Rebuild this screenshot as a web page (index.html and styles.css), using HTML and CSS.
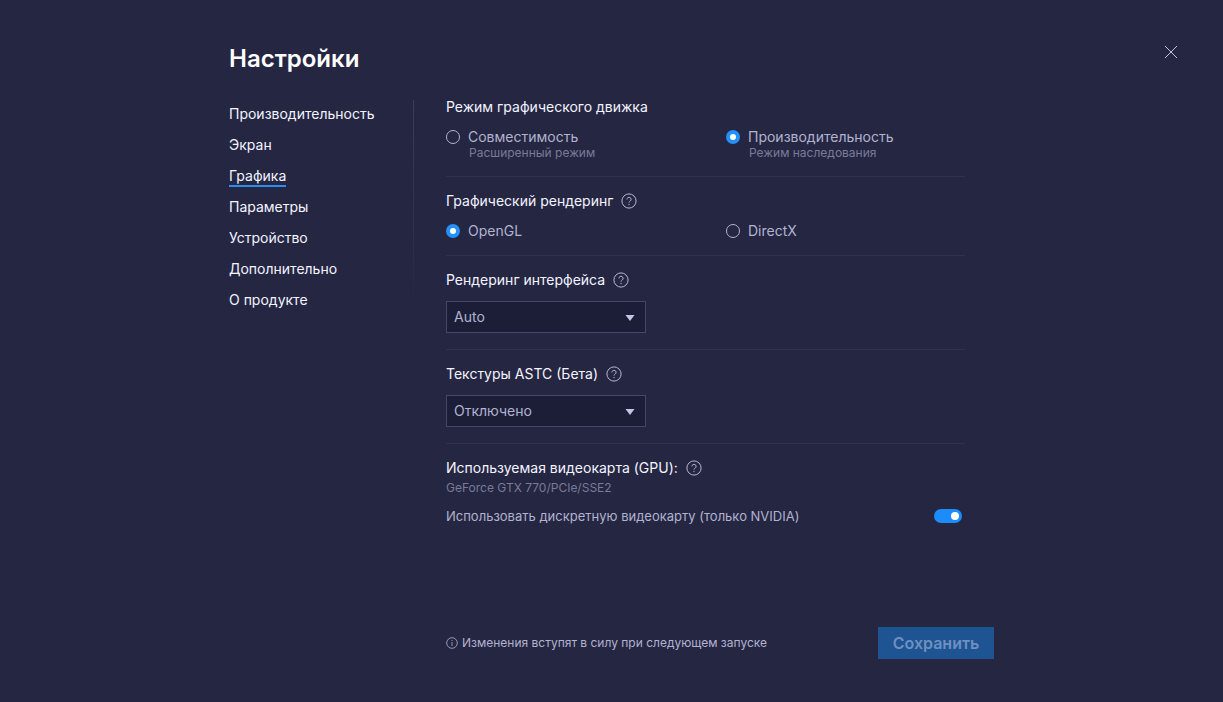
FILE: index.html
```html
<!DOCTYPE html>
<html lang="ru">
<head>
<meta charset="utf-8">
<meta name="viewport" content="width=device-width, initial-scale=1">
<title>Настройки</title>
<link rel="stylesheet" href="styles.css">
</head>
<body>
<svg class="sprite" aria-hidden="true">
  <symbol id="help" viewBox="0 0 16 16">
    <circle cx="8" cy="8" r="7.1" fill="none" stroke="currentColor"/>
    <path d="M5.9 6.4a2.1 2 0 1 1 3.3 1.6C8.3 8.6 8 8.9 8 9.7M8 10.9v1.2" fill="none" stroke="currentColor"/>
  </symbol>
</svg>
<button class="close" type="button" aria-label="Закрыть">
  <svg width="14" height="14" viewBox="0 0 14 14"><path d="M1 1l12 12M13 1L1 13" stroke="currentColor"/></svg>
</button>
<main class="settings">
  <h1 class="title">Настройки</h1>
  <div class="columns">
    <nav class="menu">
      <a class="menu-link" href="#performance">Производительность</a>
      <a class="menu-link" href="#display">Экран</a>
      <a class="menu-link active" href="#graphics" aria-current="page">Графика</a>
      <a class="menu-link" href="#preferences">Параметры</a>
      <a class="menu-link" href="#device">Устройство</a>
      <a class="menu-link" href="#advanced">Дополнительно</a>
      <a class="menu-link" href="#about">О продукте</a>
    </nav>
    <div class="content">
      <section class="section">
        <h2 class="heading" id="engine">Режим графического движка</h2>
        <div class="options" role="radiogroup" aria-labelledby="engine">
          <label class="option"><input class="radio" type="radio" name="engine"><span>Совместимость</span><small class="note">Расширенный режим</small></label>
          <label class="option"><input class="radio" type="radio" name="engine" checked><span>Производительность</span><small class="note">Режим наследования</small></label>
        </div>
      </section>
      <section class="section">
        <h2 class="heading"><span id="renderer">Графический рендеринг</span><svg class="help"><use href="#help"/></svg></h2>
        <div class="options" role="radiogroup" aria-labelledby="renderer">
          <label class="option"><input class="radio" type="radio" name="renderer" checked><span>OpenGL</span></label>
          <label class="option"><input class="radio" type="radio" name="renderer"><span>DirectX</span></label>
        </div>
      </section>
      <section class="section section-select">
        <h2 class="heading"><label for="interface">Рендеринг интерфейса</label><svg class="help"><use href="#help"/></svg></h2>
        <div class="picker">
          <select class="select" id="interface"><option>Auto</option></select>
          <svg class="arrow" viewBox="0 0 10 6"><path d="M.5 0h9L5 6z" fill="currentColor"/></svg>
        </div>
      </section>
      <section class="section section-select">
        <h2 class="heading"><label for="astc">Текстуры ASTC (Бета)</label><svg class="help"><use href="#help"/></svg></h2>
        <div class="picker">
          <select class="select" id="astc"><option>Отключено</option></select>
          <svg class="arrow" viewBox="0 0 10 6"><path d="M.5 0h9L5 6z" fill="currentColor"/></svg>
        </div>
      </section>
      <section class="section">
        <h2 class="heading">Используемая видеокарта (GPU):<svg class="help"><use href="#help"/></svg></h2>
        <p class="gpu">GeForce GTX 770/PCIe/SSE2</p>
        <label class="switch-row"><span>Использовать дискретную видеокарту (только NVIDIA)</span><input class="switch" type="checkbox" role="switch" checked></label>
      </section>
    </div>
  </div>
  <footer class="footer">
    <p class="hint">
      <svg class="info" viewBox="0 0 12 12"><circle cx="6" cy="6" r="5.3" fill="none" stroke="currentColor" stroke-width=".8"/><path d="M6 3v1M6 5v4" stroke="currentColor" stroke-width=".8"/></svg>
      Изменения вступят в силу при следующем запуске
    </p>
    <button class="save" type="button" disabled>Сохранить</button>
  </footer>
</main>
</body>
</html>
```
FILE: styles.css
```css
* { box-sizing: border-box; }

body {
  margin: 0;
  background: #252642;
  color: #b1b3cf;
  font: 14px/20px Inter, "Noto Sans", sans-serif;
}

.sprite { position: absolute; width: 0; height: 0; }

.close {
  position: absolute;
  top: 45px;
  right: 45px;
  padding: 0;
  border: 0;
  background: none;
  color: #c3c4df;
  line-height: 0;
}

.settings {
  display: flex;
  flex-direction: column;
  width: 100%;
  max-width: 765px;
  min-height: 100vh;
  margin: 0 auto;
  padding: 43px 0;
}

.title {
  margin: 0;
  color: #fff;
  font-size: 24px;
  line-height: 32px;
  font-weight: 600;
}

.columns {
  display: grid;
  grid-template-columns: 185px 1fr;
  column-gap: 32px;
  margin-top: 8px;
}

.menu {
  display: flex;
  flex-direction: column;
  align-items: flex-start;
  align-self: start;
  gap: 10px;
  margin-top: 17px;
  padding-top: 4px;
  border-right: 1px solid;
  border-image: linear-gradient(#3c3e5e, #34365400) 1;
}

.menu-link {
  height: 21px;
  color: #f3f4ff;
  line-height: 20px;
  text-decoration: none;
}

.active { border-bottom: 2px solid #2c8eea; }

.content { margin-right: 29px; }

.section {
  padding: 14px 0;
  border-bottom: 1px solid #2f3150;
}

.section-select { padding-bottom: 16px; }
.section:last-child { border-bottom: 0; }

.heading {
  display: flex;
  align-items: center;
  gap: 8px;
  margin: 0;
  color: #f3f4ff;
  font-size: 14px;
  line-height: 20px;
  font-weight: 400;
}

.help { width: 16px; height: 16px; color: #b5b7d3; }

.options {
  display: grid;
  grid-template-columns: 280px 1fr;
  margin-top: 10px;
}

.option {
  display: grid;
  grid-template-columns: 14px 1fr;
  column-gap: 8px;
  align-items: center;
}

.note {
  grid-column: 2;
  padding: 0 0 3px 1px;
  color: #797b99;
  font-size: 12px;
  line-height: 12px;
}

.radio {
  appearance: none;
  width: 14px;
  height: 14px;
  margin: 0;
  border: 1px solid #b1b3cf;
  border-radius: 50%;
}

.radio:checked { border: 4px solid #2490fa; background: #fff; }

.picker {
  position: relative;
  width: 200px;
  margin-top: 11px;
}

.select {
  display: block;
  appearance: none;
  width: 100%;
  height: 32px;
  padding: 0 28px 0 7px;
  border: 1px solid #464866;
  border-radius: 0;
  background: #1c1e38;
  color: #b1b3cf;
  font: inherit;
}

.arrow {
  position: absolute;
  top: 14px;
  right: 11px;
  width: 10px;
  height: 6px;
  color: #c3c5e2;
  pointer-events: none;
}

.gpu {
  margin: 2px 0 0;
  color: #797b99;
  font-size: 12px;
  line-height: 16px;
}

.switch-row {
  display: flex;
  align-items: center;
  justify-content: space-between;
  margin-top: 10px;
  padding-right: 3px;
  font-size: 13px;
}

.switch {
  display: flex;
  align-items: center;
  justify-content: flex-end;
  appearance: none;
  width: 28px;
  height: 14px;
  margin: 0;
  padding: 0 3px;
  border-radius: 7px;
  background: #1d8cfb;
}

.switch::before {
  content: "";
  width: 8px;
  height: 8px;
  border-radius: 50%;
  background: #fff;
}

.footer {
  display: flex;
  align-items: center;
  justify-content: space-between;
  margin-top: auto;
  padding-left: 217px;
}

.hint {
  display: flex;
  align-items: center;
  gap: 4px;
  margin: 0;
  font-size: 12px;
}

.info { width: 12px; height: 12px; }

.save {
  min-width: 116px;
  height: 32px;
  padding: 0 14px;
  border: 0;
  background: #1f5492;
  color: #6d90c1;
  font: 600 16px/32px Inter, "Noto Sans", sans-serif;
}
```
